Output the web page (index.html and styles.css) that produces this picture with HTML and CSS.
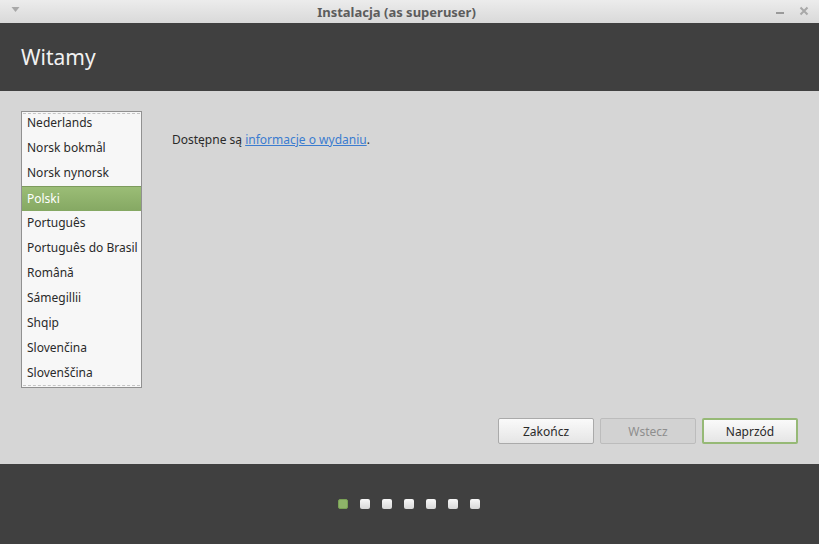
FILE: index.html
```html
<!DOCTYPE html>
<html lang="pl">
<head>
<meta charset="utf-8">
<title>Instalacja</title>
<link rel="stylesheet" href="styles.css">
</head>
<body>
<div class="window">
  <div class="titlebar">
    <span class="tb-menu"><svg width="9" height="7" viewBox="0 0 9 7"><path d="M0.5 1 L8.5 1 L4.5 6 Z" fill="#a8a8a8"/></svg></span>
    <span class="tb-title">Instalacja (as superuser)</span>
    <span class="tb-buttons">
      <svg width="10" height="10" viewBox="0 0 10 10"><rect x="1" y="6" width="8" height="2" fill="#9a9a9a"/></svg>
      <svg width="10" height="10" viewBox="0 0 10 10"><path d="M1.5 1.5 L8.5 8.5 M8.5 1.5 L1.5 8.5" stroke="#a8a8a8" stroke-width="2"/></svg>
    </span>
  </div>
  <div class="header"><h1 class="header-title">Witamy</h1></div>
  <div class="main">
    <div class="content">
      <div class="langlist">
        <div class="scroll-edge top"></div>
        <div class="lang-items">
          <div class="lang">Nederlands</div>
          <div class="lang">Norsk bokmål</div>
          <div class="lang">Norsk nynorsk</div>
          <div class="lang selected">Polski</div>
          <div class="lang">Português</div>
          <div class="lang">Português do Brasil</div>
          <div class="lang">Română</div>
          <div class="lang">Sámegillii</div>
          <div class="lang">Shqip</div>
          <div class="lang">Slovenčina</div>
          <div class="lang">Slovenščina</div>
        </div>
        <div class="scroll-edge bottom"></div>
      </div>
      <p class="info">Dostępne są <a href="#" class="link">informacje o wydaniu</a>.</p>
    </div>
    <div class="actions">
      <button class="btn">Zakończ</button>
      <button class="btn disabled">Wstecz</button>
      <button class="btn primary">Naprzód</button>
    </div>
  </div>
  <div class="footer">
    <span class="dot active"></span>
    <span class="dot"></span>
    <span class="dot"></span>
    <span class="dot"></span>
    <span class="dot"></span>
    <span class="dot"></span>
    <span class="dot"></span>
  </div>
</div>
</body>
</html>
```
FILE: styles.css
```css
* { box-sizing: border-box; }
html, body { margin: 0; padding: 0; }
body {
  width: 819px;
  height: 544px;
  overflow: hidden;
  font-family: "Noto Sans", "DejaVu Sans", sans-serif;
  font-size: 12px;
  color: #2e2e2e;
  background: #d6d6d6;
}
.window {
  display: flex;
  flex-direction: column;
  height: 544px;
}
.titlebar {
  height: 23px;
  display: flex;
  align-items: center;
  justify-content: center;
  position: relative;
  padding-right: 26px;
  background: linear-gradient(#ececec, #d9d9d9);
}
.tb-title {
  font-weight: bold;
  font-size: 13px;
  color: #5c5c5c;
  letter-spacing: 0;
}
.tb-menu {
  position: absolute;
  left: 11px;
  top: 6px;
  display: flex;
}
.tb-buttons {
  position: absolute;
  right: 10px;
  top: 6px;
  display: flex;
  gap: 14px;
}
.header {
  height: 68px;
  background: #404040;
  display: flex;
  align-items: center;
  padding-left: 21px;
  padding-bottom: 0;
}
.header-title {
  margin: 0;
  font-weight: normal;
  font-size: 21px;
  color: #f2f2f2;
}
.main {
  flex: 1;
  display: flex;
  flex-direction: column;
  padding: 20px 21px 20px 21px;
}
.content {
  flex: 1;
  display: flex;
  align-items: flex-start;
}
.langlist {
  width: 121px;
  height: 277px;
  border: 1px solid #919191;
  background: #f7f7f7;
  position: relative;
  overflow: hidden;
}
.lang-items {
  margin-top: -1px;
}
.scroll-edge {
  position: absolute;
  left: 1px;
  right: 1px;
  height: 0;
  border-top: 1px dashed #c4c4c4;
  z-index: 1;
}
.scroll-edge.top { top: 1px; }
.scroll-edge.bottom { bottom: 1px; }
.lang {
  height: 25px;
  line-height: 24px;
  padding-left: 5px;
  white-space: nowrap;
  color: #2a2a2a;
}
.lang.selected {
  background: linear-gradient(#9bbd76, #85a863);
  color: #ffffff;
  border-top: 1px solid #7d9b5d;
  line-height: 23px;
}
.info {
  margin: 20px 0 0 30px;
  color: #2a2a2a;
}
.link {
  color: #3b7cd0;
  text-decoration: underline;
}
.actions {
  display: flex;
  justify-content: flex-end;
  gap: 6px;
}
.btn {
  width: 96px;
  height: 26px;
  font-family: inherit;
  font-size: 12px;
  color: #2a2a2a;
  border: 1px solid #aaaaaa;
  border-radius: 2px;
  background: linear-gradient(#fafafa, #e5e5e5);
  padding: 0;
}
.btn.disabled {
  color: #8e8e8e;
  background: #d2d2d2;
  border-color: #bcbcbc;
}
.btn.primary {
  border: 2px solid #96b976;
}
.footer {
  height: 80px;
  background: #404040;
  display: flex;
  justify-content: center;
  align-items: center;
  gap: 12px;
  padding-right: 2px;
}
.dot {
  width: 10px;
  height: 10px;
  border-radius: 2px;
  background: linear-gradient(#f8f8f8, #d8d8d8);
}
.dot.active {
  background: #8eb469;
  border: 1px solid #79a055;
}
```
